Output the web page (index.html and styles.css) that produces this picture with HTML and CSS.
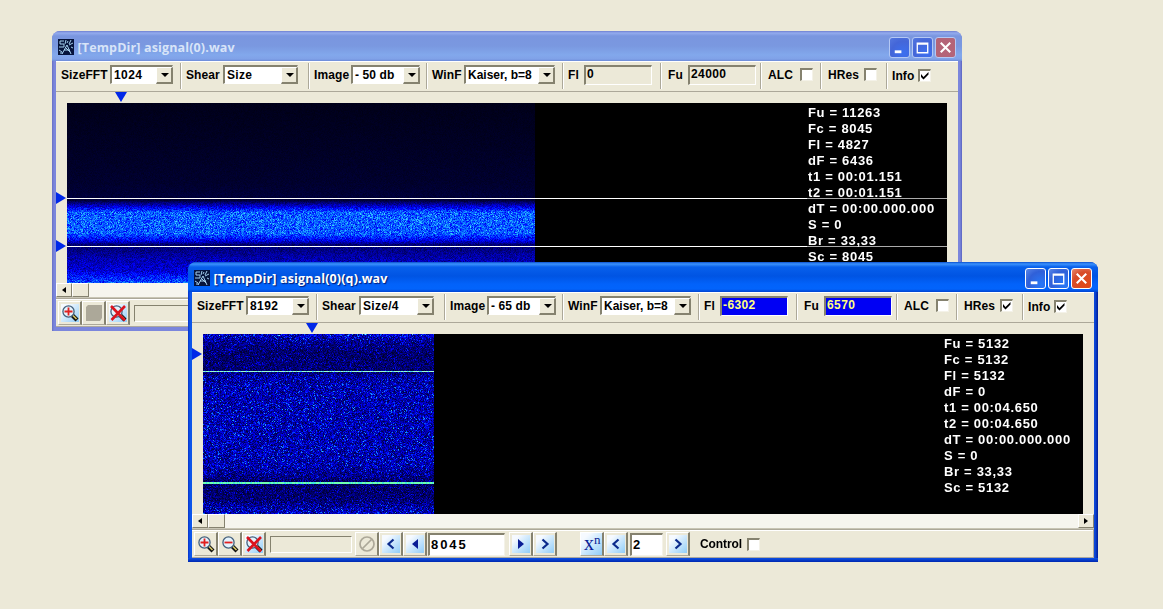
FILE: index.html
```html
<!DOCTYPE html>
<html lang="en">
<head>
<meta charset="utf-8">
<title>Signal analyzer</title>
<link rel="stylesheet" href="styles.css">
</head>
<body>
<svg class="defs" width="0" height="0">
  <defs>
    <symbol id="app" viewBox="0 0 16 16">
      <rect width="16" height="16" fill="#06143c"/>
      <path d="M6 2H2V5H6V8H1M8 1l-1 4M10 2l-1 2M13 1l-2 4M15 4l-4 2M9 6l-5 9M9 6l4 9M6 11h6M7 8l5 5M1 11l3 2M2 14h3M13 8l2 1" fill="none" stroke="#a5d0ee" stroke-width="1"/>
    </symbol>
    <symbol id="lens" viewBox="0 0 18 18">
      <path d="M10.5 10.5L16 16" stroke="#111" stroke-width="4.200"/>
      <path d="M11 10.5L15.5 15" stroke="#d8c868" stroke-width="1.6"/>
      <circle cx="7.500" cy="7.500" r="5.6" fill="#e4f2fc" stroke="#44607c" stroke-width="1.3"/>
    </symbol>
    <symbol id="zin" viewBox="0 0 18 18"><use href="#lens"/><path d="M3.5 7.500h8M7.500 3.500v8" stroke="#e02020" stroke-width="1.8"/></symbol>
    <symbol id="zout" viewBox="0 0 18 18"><use href="#lens"/><path d="M3.500 7.500h8" stroke="#e02020" stroke-width="1.800"/></symbol>
    <symbol id="zdel" viewBox="0 0 18 18"><use href="#lens"/><path d="M2 2L16 16.500M16 2L2.500 16" stroke="#dc141e" stroke-width="2.600"/></symbol>
  </defs>
</svg>

<section class="window inactive">
  <header class="titlebar">
    <svg class="appicon"><use href="#app"/></svg>
    <h1 class="title">[TempDir] asignal(0).wav</h1>
    <div class="caption">
      <span class="cap"><svg viewBox="0 0 20 20"><path d="M5 14.500h7" stroke="#fff" stroke-width="3"/></svg></span>
      <span class="cap"><svg viewBox="0 0 20 20"><path d="M4.500 5.500h11v10h-11zM4.500 6.500h11" stroke="#fff" stroke-width="1.400" fill="none"/></svg></span>
      <span class="cap close"><svg viewBox="0 0 20 20"><path d="M5 5l10 10M15 5L5 15" stroke="#fff" stroke-width="2.200"/></svg></span>
    </div>
  </header>
  <div class="toolbar">
    <div class="group g-fft">SizeFFT<span class="combo c1">1024<i class="drop"></i></span></div>
    <div class="group g-shear">Shear<span class="combo c2">Size<i class="drop"></i></span></div>
    <div class="group g-image">Image<span class="combo c3">- 50 db<i class="drop"></i></span></div>
    <div class="group g-win">WinF<span class="combo c4">Kaiser, b=8<i class="drop"></i></span></div>
    <div class="group g-fl">Fl<span class="field">0</span></div>
    <div class="group g-fu">Fu<span class="field">24000</span></div>
    <div class="group g-alc">ALC<span class="check"></span></div>
    <div class="group g-hres">HRes<span class="check"></span></div>
    <div class="group g-info">Info<span class="check"><svg viewBox="0 0 13 13"><path d="M3 5v3l2.500 2.500L10.500 5.500V3L5.500 8z"/></svg></span></div>
  </div>
  <div class="view">
    <canvas id="spectrum-wide" width="880" height="180"></canvas>
    <ul class="info"><li>Fu = 11263</li><li>Fc = 8045</li><li>Fl = 4827</li><li>dF = 6436</li><li>t1 = 00:01.151</li><li>t2 = 00:01.151</li><li>dT = 00:00.000.000</li><li>S = 0</li><li>Br = 33,33</li><li>Sc = 8045</li></ul>
    <i class="mark-top time-a"></i><i class="mark-left high"></i><i class="mark-left low"></i>
  </div>
  <div class="scroll"><span class="arrow"><i></i></span><span class="thumb"></span><span class="arrow right"><i></i></span></div>
  <footer class="status">
    <span class="tool glassy"><svg viewBox="0 0 18 18"><use href="#zin"/></svg></span>
    <span class="tool"><svg viewBox="0 0 18 18"><path d="M3 1h14v13l-2 3H1V3z" fill="#aca899"/></svg></span>
    <span class="tool glassy"><svg viewBox="0 0 18 18"><use href="#zdel"/></svg></span>
    <span class="progress"></span>
  </footer>
</section>

<section class="window active">
  <header class="titlebar">
    <svg class="appicon"><use href="#app"/></svg>
    <h1 class="title">[TempDir] asignal(0)(q).wav</h1>
    <div class="caption">
      <span class="cap"><svg viewBox="0 0 20 20"><path d="M5 14.500h7" stroke="#fff" stroke-width="3"/></svg></span>
      <span class="cap"><svg viewBox="0 0 20 20"><path d="M4.500 5.500h11v10h-11zM4.500 6.500h11" stroke="#fff" stroke-width="1.400" fill="none"/></svg></span>
      <span class="cap close"><svg viewBox="0 0 20 20"><path d="M5 5l10 10M15 5L5 15" stroke="#fff" stroke-width="2.200"/></svg></span>
    </div>
  </header>
  <div class="toolbar">
    <div class="group g-fft">SizeFFT<span class="combo c1">8192<i class="drop"></i></span></div>
    <div class="group g-shear">Shear<span class="combo c2">Size/4<i class="drop"></i></span></div>
    <div class="group g-image">Image<span class="combo c3">- 65 db<i class="drop"></i></span></div>
    <div class="group g-win">WinF<span class="combo c4">Kaiser, b=8<i class="drop"></i></span></div>
    <div class="group g-fl">Fl<span class="field lit">-6302</span></div>
    <div class="group g-fu">Fu<span class="field lit">6570</span></div>
    <div class="group g-alc">ALC<span class="check"></span></div>
    <div class="group g-hres">HRes<span class="check"><svg viewBox="0 0 13 13"><path d="M3 5v3l2.500 2.500L10.500 5.500V3L5.500 8z"/></svg></span></div>
    <div class="group g-info">Info<span class="check"><svg viewBox="0 0 13 13"><path d="M3 5v3l2.500 2.500L10.500 5.500V3L5.500 8z"/></svg></span></div>
  </div>
  <div class="view">
    <canvas id="spectrum-narrow" width="880" height="180"></canvas>
    <ul class="info"><li>Fu = 5132</li><li>Fc = 5132</li><li>Fl = 5132</li><li>dF = 0</li><li>t1 = 00:04.650</li><li>t2 = 00:04.650</li><li>dT = 00:00.000.000</li><li>S = 0</li><li>Br = 33,33</li><li>Sc = 5132</li></ul>
    <i class="mark-top time-b"></i><i class="mark-left top"></i>
  </div>
  <div class="scroll"><span class="arrow"><i></i></span><span class="thumb"></span><span class="arrow right"><i></i></span></div>
  <footer class="status">
    <span class="tool"><svg viewBox="0 0 18 18"><use href="#zin"/></svg></span>
    <span class="tool"><svg viewBox="0 0 18 18"><use href="#zout"/></svg></span>
    <span class="tool glassy"><svg viewBox="0 0 18 18"><use href="#zdel"/></svg></span>
    <span class="progress"></span>
    <span class="tool"><svg viewBox="0 0 18 18"><g fill="none" stroke="#aca899" stroke-width="1.700"><circle cx="9" cy="9" r="7"/><path d="M4.500 13.500l9-9"/></g></svg></span>
    <span class="tool glassy"><svg viewBox="0 0 18 18"><path d="M11.500 4.500L6.500 9l5 4.500" fill="none" stroke="#0a2a8c" stroke-width="2.200"/></svg></span>
    <span class="tool glassy"><svg viewBox="0 0 18 18"><path d="M12 4v10L6 9z" fill="#0a1e96"/></svg></span>
    <span class="entry wide">8045</span>
    <span class="tool glassy"><svg viewBox="0 0 18 18"><path d="M6 4v10l6-5z" fill="#0a1e96"/></svg></span>
    <span class="tool glassy"><svg viewBox="0 0 18 18"><path d="M6.500 4.500L11.500 9l-5 4.500" fill="none" stroke="#0a2a8c" stroke-width="2.200"/></svg></span>
    <span class="tool power">x<sup>n</sup></span>
    <span class="tool glassy"><svg viewBox="0 0 18 18"><path d="M11.500 4.500L6.500 9l5 4.500" fill="none" stroke="#0a2a8c" stroke-width="2.200"/></svg></span>
    <span class="entry small">2</span>
    <span class="tool glassy"><svg viewBox="0 0 18 18"><path d="M6.500 4.500L11.500 9l-5 4.500" fill="none" stroke="#0a2a8c" stroke-width="2.200"/></svg></span>
    <span class="control">Control</span><span class="check"></span>
  </footer>
</section>
<script src="spectrum.js"></script>
</body>
</html>
```
FILE: styles.css
```css
* { box-sizing: border-box; }
body { margin: 0; width: 1163px; height: 609px; overflow: hidden; position: relative; background: #ece9d8; font: bold 12px/14px "Liberation Sans", Arial, sans-serif; color: #000; }
.defs { position: absolute; }

/* Window frames */
.window { position: absolute; width: 910px; height: 300px; padding: 0 4px 4px; display: flex; flex-direction: column; border-radius: 8px 8px 0 0; }
.inactive { left: 52px; top: 31px; background: linear-gradient(90deg, #6670c4 0, #7b86dc 2px, #7b86dc 908px, #5a64c0 910px); }
.active { left: 188px; top: 262px; background: linear-gradient(90deg, #0830c8 0, #0c55ea 2px, #0c48d8 907px, #001c98 910px); }
.active::after { content: ""; height: 4px; margin: 0 -4px -4px; background: linear-gradient(#0c50e4, #0028b0); }
.titlebar { flex: none; height: 30px; margin: 0 -4px; padding: 3px 6px 0; display: flex; align-items: center; border-radius: 8px 8px 0 0; }
.inactive .titlebar { background: linear-gradient(#6f7fd0 0, #93abee 2px, #7a96df 5px, #7a98e0 15px, #82a8ec 24px, #80a2e8 28px, #6c8ad8); }
.active .titlebar { background: linear-gradient(#0a50d0 0, #3b92fc 2px, #0860ec 5px, #0054e3 14px, #0262fa 22px, #0264fc 27px, #0144d0); }
.appicon { width: 16px; height: 16px; margin-top: -2px; }
.title { flex: 1; margin: 0 0 0 3.5px; padding-top: 1px; font: bold 12.5px/18px "Open Sans", "Noto Sans", sans-serif; letter-spacing: .14px; white-space: pre; }
.inactive .title { color: #d8e4f8; }
.active .title { color: #fff; text-shadow: 1px 1px 1px #001c78; }
.caption { display: flex; gap: 2px; }
.cap { width: 21px; height: 21px; border: 1px solid #fff; border-radius: 3px; background: radial-gradient(circle at 80% 80%, #2878f8, #3060d8 60%, #5c88e8); }
.cap svg { display: block; width: 19px; height: 19px; }
.cap.close { background: radial-gradient(circle at 70% 80%, #e04818, #d84c28 60%, #e88a70); }
.inactive .cap { border-color: #b4c8f4; background: radial-gradient(circle at 70% 80%, #3c70f0, #4466d8 60%, #5478e0); }
.inactive .cap.close { background: #b46478; }

/* Toolbar */
.toolbar { flex: none; height: 31px; display: flex; background: #ece9d8; border-top: 1px solid #fff; border-bottom: 1px solid #aca899; }
.group { display: flex; align-items: center; justify-content: space-between; flex: none; height: 26px; margin-top: 1px; border-right: 1px solid #aca899; box-shadow: 1px 0 #fff; letter-spacing: .1px; white-space: nowrap; padding: 0 7px 3px 5px; }
.g-fft { width: 125px; padding-left: 5px; }
.g-shear { width: 128px; padding-right: 10px; padding-left: 5px; }
.g-image { width: 118px; padding-right: 6px; }
.g-win { width: 136px; padding-right: 7px; }
.g-fl { width: 98px; padding-right: 8px; }
.g-fu { width: 100px; padding-right: 4px; padding-left: 7px; }
.g-alc { width: 60px; padding-right: 7px; padding-left: 7px; }
.g-hres { width: 66px; padding-right: 9px; padding-left: 7px; }
.g-info { flex: 1; justify-content: flex-start; gap: 4px; border: 0; box-shadow: none; padding: 0 0 1px 5px; }
.combo { display: flex; align-items: center; justify-content: space-between; height: 19px; background: #fff; border: 1px solid #85826f; border-top-width: 2px; border-left-width: 2px; border-right-color: #fff; border-bottom-color: #fff; padding-left: 2px; }
.c1 { width: 63px; letter-spacing: .45px; }
.c2 { width: 75px; letter-spacing: .3px; }
.c3 { width: 69px; }
.c4 { width: 91px; letter-spacing: 0; }
.drop { width: 17px; height: 17px; margin: -1px -1px -1px 0; background: #ece9d8; border: 1px solid #fff; border-right: 2px solid #85826f; border-bottom: 2px solid #85826f; display: flex; align-items: center; justify-content: center; }
.drop::after { content: ""; border: 4px solid transparent; border-top-color: #000; border-bottom: 0; margin: 1px 0 0 1px; }
.field { width: 68px; height: 20px; padding-left: 1px; line-height: 15px; letter-spacing: .4px; border: 1px solid #fff; border-top: 2px solid #85826f; border-left: 2px solid #85826f; }
.field.lit { background: #0000f4; color: #ffff80; }
.check { flex: none; width: 13px; height: 13px; background: #fff; border: 1px solid #f4f2e8; border-top: 2px solid #85826f; border-left: 2px solid #85826f; }
.check svg { display: block; width: 13px; height: 13px; margin: -2px; }

/* Spectrogram */
.view { position: relative; flex: none; height: 191px; padding: 11px 11px 0; background: #ece9d8; display: flex; }
.view canvas { display: block; }
.info { list-style: none; position: absolute; left: 752px; top: 13px; margin: 0; padding: 0; font-size: 13px; line-height: 16px; letter-spacing: .68px; color: #fff; white-space: pre; }
.mark-top, .mark-left { position: absolute; border: 5px solid transparent; }
.mark-top { top: 0; border-top: 10px solid #0028e8; border-bottom: 0; border-left-width: 6px; border-right-width: 6px; }
.mark-left { left: 0; border-left: 10px solid #0028e8; border-right: 0; border-top-width: 6px; border-bottom-width: 6px; }
.time-a { left: 59px; }
.time-b { left: 114px; }
.high { top: 100px; }
.low { top: 148px; }
.top { top: 25px; }

/* Scrollbar and bottom strip */
.scroll { flex: none; height: 15px; display: flex; background: #f6f5ee; border-bottom: 1px solid #c8c5b4; }
.arrow, .thumb { width: 16px; background: #ece9d8; border: 1px solid #fff; border-right-color: #85826f; border-bottom-color: #85826f; display: flex; align-items: center; justify-content: center; }
.thumb { width: 17px; }
.arrow i { border: 3px solid transparent; border-right: 4px solid #000; border-left: 0; }
.right { margin-left: auto; }
.right i { border-right: 0; border-left: 4px solid #000; }
.status { flex: none; height: 29px; display: flex; align-items: center; background: #ece9d8; border-top: 1px solid #aca899; border-right: 1px solid #aca899; border-bottom: 1px solid #aca8a0; padding: 1px 0 0 2px; box-shadow: inset 0 1px #fff; }
.tool { width: 24px; height: 24px; flex: none; padding: 2px; border: 1px solid #fff; border-right: 2px solid #85826f; border-bottom-color: #aca899; }
.tool svg { display: block; width: 18px; height: 18px; }
.glassy svg { background: linear-gradient(135deg, #f6faff 20%, #90cdf8); }
.progress { width: 82px; height: 17px; margin: 0 3px 0 4px; border: 1px solid #fff; border-top-color: #85826f; border-left-color: #85826f; flex: none; }
.entry { height: 23px; background: #fff; border: 1px solid #f4f2e8; border-top: 2px solid #85826f; border-left: 2px solid #85826f; padding-left: 1px; line-height: 19px; font-size: 13px; letter-spacing: 1.9px; flex: none; }
.wide { width: 77px; margin: 0 4px 0 1px; }
.small { width: 33px; margin: 0 3px 0 2px; }
.power { margin-left: 23px; padding: 0 0 0 3px; font: 20px/21px "Liberation Serif", serif; color: #0a1e96; white-space: nowrap; background: linear-gradient(135deg, #f6faff 20%, #90cdf8); }
.power sup { font-size: 13px; line-height: 0; vertical-align: 6px; }
.control { margin: 0 5px 0 10px; letter-spacing: -.1px; }
```
FILE: spectrum.js
```javascript
// Seeded generator keeps the noise identical between loads.
function generator(seed) {
  return function () {
    seed = (seed * 1664525 + 1013904223) >>> 0;
    return seed / 4294967296;
  };
}

function ramp(y, stops) {
  for (let i = 1; i < stops.length; i++) {
    if (y <= stops[i][0]) {
      const a = stops[i - 1], b = stops[i];
      return a[1] + (b[1] - a[1]) * (y - a[0]) / (b[0] - a[0]);
    }
  }
  return stops[stops.length - 1][1];
}

// Level 0..1 maps black -> blue -> azure -> pale cyan.
function color(v) {
  if (v < 0.45) return [0, 0, v * 567];
  const t = Math.min((v - 0.45) / 0.55, 1);
  return [t * t * t * 110, t * 250, 255];
}

function draw(id, width, level, seed) {
  const context = document.getElementById(id).getContext('2d');
  const random = generator(seed);
  const image = context.createImageData(880, 180);
  for (let y = 0; y < 180; y++) {
    for (let x = 0; x < 880; x++) {
      const p = (y * 880 + x) * 4;
      const c = x < width ? color(Math.max(0, level(y, random))) : [0, 0, 0];
      image.data.set([c[0], c[1], c[2], 255], p);
    }
  }
  context.putImageData(image, 0, 0);
  return { context, random };
}

const wideStops = [[0, .045], [80, .08], [94, .1], [97, .1], [104, .42], [109, .65], [130, .65], [137, .42], [141, .2], [145, .22], [155, .3], [168, .38], [179, .62]];
const wide = draw('spectrum-wide', 468, (y, r) => {
  const base = ramp(y, wideStops);
  return base + (r() + r() - 1) * base * (y < 97 ? .3 : .45);
}, 17).context;
wide.fillStyle = '#fff';
wide.fillRect(0, 95, 740, 1);
wide.fillRect(0, 143, 740, 1);
wide.fillStyle = '#aaa';
wide.fillRect(740, 95, 140, 1);
wide.fillRect(740, 143, 140, 1);

const narrowStops = [[0, .38], [8, .25], [20, .19], [36, .2], [45, .3], [60, .32], [130, .32], [140, .25], [149, .18], [165, .2], [179, .35]];
const narrow = draw('spectrum-narrow', 231, (y, r) => {
  const base = ramp(y, narrowStops);
  const peak = Math.pow(r(), 6) * base * 1.5;
  return base * (.35 + r() * .95) + peak;
}, 91);
for (let x = 0; x < 231; x++) {
  narrow.context.fillStyle = narrow.random() > .3 ? '#9affd0' : '#48d8f0';
  narrow.context.fillRect(x, 37, 1, 1);
  narrow.context.fillStyle = narrow.random() > .3 ? '#70ffb0' : '#40e8d8';
  narrow.context.fillRect(x, 148, 1, 2);
}
```
